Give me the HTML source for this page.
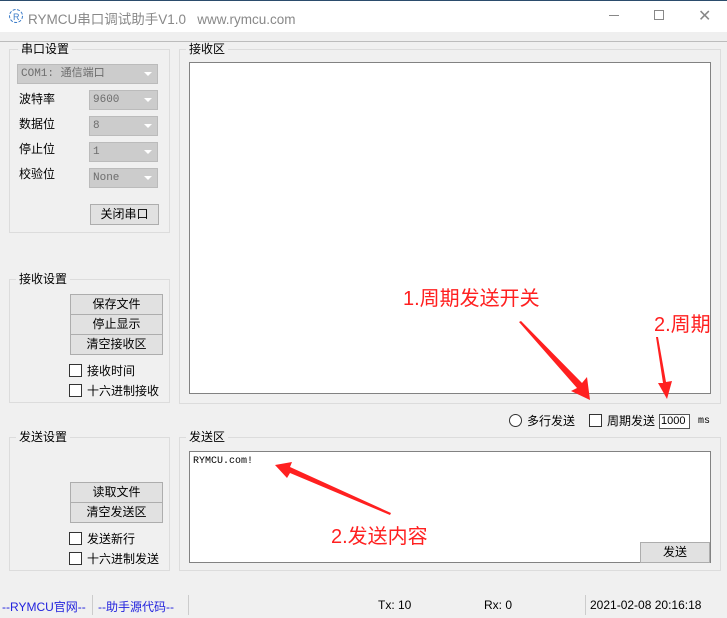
<!DOCTYPE html>
<html><head><meta charset="utf-8"><style>
*{margin:0;padding:0;box-sizing:border-box}
body{width:727px;height:618px;background:#f0f0f0;position:relative;overflow:hidden;font-family:"Liberation Sans","Noto Sans CJK SC",sans-serif;font-size:12px;color:#000}
.a{position:absolute}
.grp{position:absolute;border:1px solid #dcdcdc}
.gl{position:absolute;top:-8px;left:6px;background:#f0f0f0;padding:0 3px;font-size:12px;line-height:14px}
.cb{position:absolute;background:#ccc;border:1px solid #bbb;color:#6d6d6d;font-family:"Liberation Mono","Noto Sans CJK SC",monospace;font-size:11px;line-height:18px;padding-left:3px}
.cb:after{content:"";position:absolute;right:5px;top:7px;border-left:4px solid transparent;border-right:4px solid transparent;border-top:4px solid #fff}
.btn{position:absolute;background:#e1e1e1;border:1px solid #adadad;text-align:center;font-size:12px;line-height:18px}
.chk{position:absolute;width:13px;height:13px;border:1px solid #333;background:#fff}
.lbl{position:absolute;font-size:12px;line-height:14px}
.ta{position:absolute;background:#fff;border:1px solid #828282}
.red{position:absolute;color:#ff2020;font-size:20px;line-height:22px}
</style></head><body>
<div class="a" style="left:0;top:0;width:727px;height:32px;background:#fff;border-top:1px solid #2b4c6c"></div>
<svg class="a" style="left:8px;top:8px" width="16" height="16"><circle cx="8" cy="8" r="6.5" fill="none" stroke="#3a7bc8" stroke-dasharray="3 1.5"/><text x="5" y="12" font-size="9" fill="#3a7bc8" font-family="Liberation Sans">R</text></svg>
<div class="a" style="left:28px;top:8px;font-size:13.5px;color:#888">RYMCU串口调试助手V1.0&nbsp;&nbsp; www.rymcu.com</div>
<div class="a" style="left:609px;top:15px;width:10px;height:1px;background:#888"></div>
<div class="a" style="left:654px;top:10px;width:10px;height:10px;border:1px solid #888"></div>
<div class="a" style="left:698px;top:6px;font-size:16px;color:#888">✕</div>
<div class="a" style="left:0;top:32px;width:727px;height:10px;background:#efefef;border-bottom:1px solid #bcbcbc"></div>

<div class="grp" style="left:9px;top:49px;width:161px;height:184px"><span class="gl" style="left:8px">串口设置</span></div>
<div class="cb" style="left:17px;top:64px;width:141px;height:20px">COM1: 通信端口</div>
<div class="lbl" style="left:19px;top:92px">波特率</div>
<div class="lbl" style="left:19px;top:117px">数据位</div>
<div class="lbl" style="left:19px;top:142px">停止位</div>
<div class="lbl" style="left:19px;top:167px">校验位</div>
<div class="cb" style="left:89px;top:90px;width:69px;height:20px">9600</div>
<div class="cb" style="left:89px;top:116px;width:69px;height:20px">8</div>
<div class="cb" style="left:89px;top:142px;width:69px;height:20px">1</div>
<div class="cb" style="left:89px;top:168px;width:69px;height:20px">None</div>
<div class="btn" style="left:90px;top:204px;width:69px;height:21px">关闭串口</div>

<div class="grp" style="left:179px;top:49px;width:542px;height:355px"><span class="gl">接收区</span></div>
<div class="ta" style="left:189px;top:62px;width:522px;height:332px"></div>

<div class="grp" style="left:9px;top:279px;width:161px;height:124px"><span class="gl">接收设置</span></div>
<div class="btn" style="left:70px;top:294px;width:93px;height:21px">保存文件</div>
<div class="btn" style="left:70px;top:314px;width:93px;height:21px">停止显示</div>
<div class="btn" style="left:70px;top:334px;width:93px;height:21px">清空接收区</div>
<div class="chk" style="left:69px;top:364px"></div><div class="lbl" style="left:87px;top:364px">接收时间</div>
<div class="chk" style="left:69px;top:384px"></div><div class="lbl" style="left:87px;top:384px">十六进制接收</div>

<div class="a" style="left:509px;top:414px;width:13px;height:13px;border:1px solid #333;border-radius:50%;background:#fff"></div>
<div class="lbl" style="left:527px;top:414px">多行发送</div>
<div class="chk" style="left:589px;top:414px"></div>
<div class="lbl" style="left:607px;top:414px">周期发送</div>
<div class="a" style="left:659px;top:414px;width:31px;height:15px;border:1px solid #555;background:#fff;font-size:11px;line-height:13px;padding-left:1px">1000</div>
<div class="a" style="left:698px;top:416px;font-family:'Liberation Mono',monospace;font-size:10px">ms</div>

<div class="grp" style="left:9px;top:437px;width:161px;height:134px"><span class="gl">发送设置</span></div>
<div class="btn" style="left:70px;top:482px;width:93px;height:21px">读取文件</div>
<div class="btn" style="left:70px;top:502px;width:93px;height:21px">清空发送区</div>
<div class="chk" style="left:69px;top:532px"></div><div class="lbl" style="left:87px;top:532px">发送新行</div>
<div class="chk" style="left:69px;top:552px"></div><div class="lbl" style="left:87px;top:552px">十六进制发送</div>

<div class="grp" style="left:179px;top:437px;width:542px;height:134px"><span class="gl">发送区</span></div>
<div class="ta" style="left:189px;top:451px;width:522px;height:112px"></div>
<div class="a" style="left:193px;top:456px;font-family:'Liberation Mono',monospace;font-size:10px">RYMCU.com!</div>
<div class="btn" style="left:640px;top:542px;width:70px;height:21px">发送</div>

<div class="a" style="left:92px;top:595px;width:1px;height:20px;background:#ccc"></div>
<div class="a" style="left:188px;top:595px;width:1px;height:20px;background:#ccc"></div>
<div class="a" style="left:585px;top:595px;width:1px;height:20px;background:#ccc"></div>
<div class="a" style="left:2px;top:598px;color:#2222dd">--RYMCU官网--</div>
<div class="a" style="left:98px;top:598px;color:#2222dd">--助手源代码--</div>
<div class="a" style="left:378px;top:598px">Tx: 10</div>
<div class="a" style="left:484px;top:598px">Rx: 0</div>
<div class="a" style="left:590px;top:598px">2021-02-08 20:16:18</div>

<div class="red" style="left:403px;top:288px">1.周期发送开关</div>
<div class="red" style="left:654px;top:314px">2.周期</div>
<div class="red" style="left:331px;top:526px">2.发送内容</div>
<svg class="a" style="left:0;top:0" width="727" height="618">
<g fill="#ff2020">
<polygon points="519,322 521,321 582,383 587,377 590,400 571,391 577,388"/>
<polygon points="656,337 658,337 666,382 672,381 667,399 658,383 663,383"/>
<polygon points="391,513 390,515 290,473 287,478 275,465 292,462 290,467"/>
</g></svg>
</body></html>
